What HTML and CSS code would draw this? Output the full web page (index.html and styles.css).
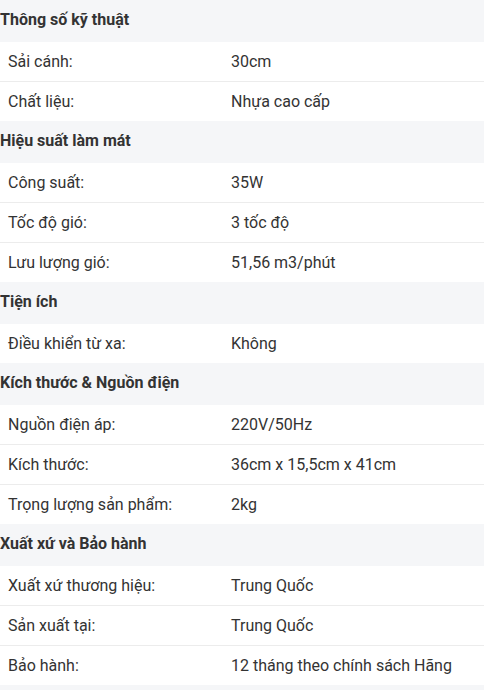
FILE: index.html
```html
<!DOCTYPE html>
<html lang="vi">
<head>
<meta charset="utf-8">
<link rel="stylesheet" href="styles.css">
</head>
<body>
<div class="specs">
  <div class="group">
    <div class="head">Thông số kỹ thuật</div>
    <div class="row"><span class="k">Sải cánh:</span><span class="v">30cm</span></div>
    <div class="row"><span class="k">Chất liệu:</span><span class="v">Nhựa cao cấp</span></div>
  </div>
  <div class="group">
    <div class="head">Hiệu suất làm mát</div>
    <div class="row"><span class="k">Công suất:</span><span class="v">35W</span></div>
    <div class="row"><span class="k">Tốc độ gió:</span><span class="v">3 tốc độ</span></div>
    <div class="row"><span class="k">Lưu lượng gió:</span><span class="v">51,56 m3/phút</span></div>
  </div>
  <div class="group">
    <div class="head">Tiện ích</div>
    <div class="row"><span class="k">Điều khiển từ xa:</span><span class="v">Không</span></div>
  </div>
  <div class="group">
    <div class="head">Kích thước &amp; Nguồn điện</div>
    <div class="row"><span class="k">Nguồn điện áp:</span><span class="v">220V/50Hz</span></div>
    <div class="row"><span class="k">Kích thước:</span><span class="v">36cm x 15,5cm x 41cm</span></div>
    <div class="row"><span class="k">Trọng lượng sản phẩm:</span><span class="v">2kg</span></div>
  </div>
  <div class="group">
    <div class="head">Xuất xứ và Bảo hành</div>
    <div class="row"><span class="k">Xuất xứ thương hiệu:</span><span class="v">Trung Quốc</span></div>
    <div class="row"><span class="k">Sản xuất tại:</span><span class="v">Trung Quốc</span></div>
    <div class="row"><span class="k">Bảo hành:</span><span class="v">12 tháng theo chính sách Hãng</span></div>
  </div>
  <div class="group">
    <div class="head head-empty"></div>
  </div>
</div>
</body>
</html>
```

FILE: styles.css
```css
html, body {
  margin: 0;
  padding: 0;
  background: #fff;
}
body {
  font-family: Roboto, "Liberation Sans", Arial, sans-serif;
  font-size: 16px;
  color: #333;
}
.specs {
  display: flex;
  flex-direction: column;
  width: 484px;
}
.head {
  height: 42px;
  display: flex;
  align-items: center;
  background: #f5f6f8;
  font-weight: 700;
  color: #333;
  padding-bottom: 3px;
  box-sizing: border-box;
}
.row {
  display: grid;
  grid-template-columns: 223px 1fr;
  height: 40px;
  align-items: center;
  box-sizing: border-box;
  border-bottom: 1px solid #ececec;
}
.row:last-child {
  height: 39px;
  border-bottom: none;
}
.k, .v {
  padding-left: 8px;
}
```
